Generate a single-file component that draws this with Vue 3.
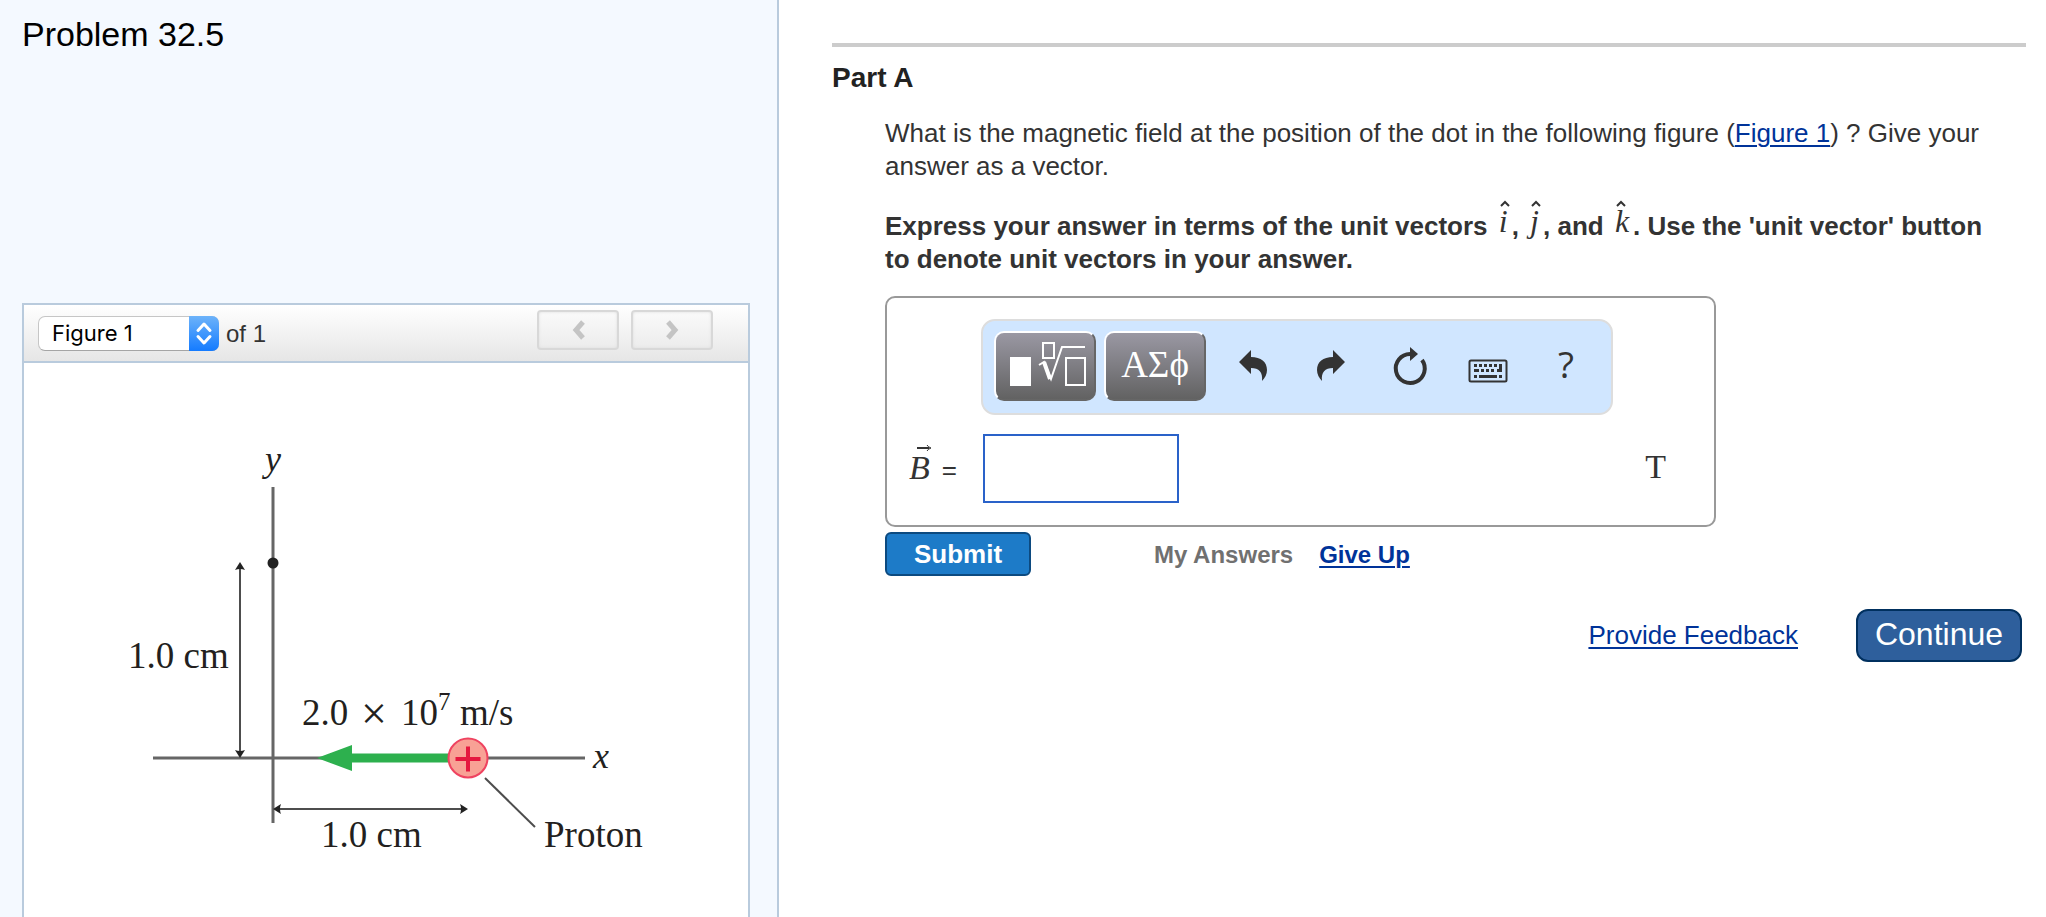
<template>
  <div class="page">
    <aside class="sidebar">
      <h1 class="problem-title">Problem 32.5</h1>

      <section class="figure-panel" aria-label="Figure">
        <header class="figure-header">
          <div class="figure-picker">
            <div class="select-wrap">
              <select id="figure-select" v-model="figure" aria-label="Figure">
                <option value="1">Figure 1</option>
              </select>
              <span class="stepper" aria-hidden="true">
                <svg width="30" height="35" viewBox="0 0 30 35">
                  <path d="M9 14.500 15 8l6 6.500M9 20.500 15 27l6-6.500" />
                </svg>
              </span>
            </div>
            <label for="figure-select">of 1</label>
          </div>
          <div class="figure-nav">
            <button type="button" aria-label="Previous figure" disabled>
              <svg width="14" height="20" viewBox="0 0 14 20"><path d="M12 2 5 10l7 8" /></svg>
            </button>
            <button type="button" aria-label="Next figure" disabled>
              <svg width="14" height="20" viewBox="0 0 14 20"><path d="m3 2 7 8-7 8" /></svg>
            </button>
          </div>
        </header>

        <svg class="diagram" viewBox="0 0 724 554" role="img" aria-label="Proton moving toward the origin">
          <g class="axis">
            <path d="M249 124V460" />
            <path d="M129 395H561" />
          </g>
          <g class="dimension">
            <path d="M216 202V392" />
            <path d="M253 446H441" />
            <path d="M461 415 511 464" />
          </g>
          <g class="tips">
            <path d="m216 199 5 8q-5-2-10 0z" />
            <path d="m216 395 5-8q-5 2-10 0z" />
            <path d="m249 446 8-5q-2 5 0 10z" />
            <path d="m444 446-8-5q2 5 0 10z" />
            <circle cx="249" cy="200" r="5.500" />
          </g>
          <path class="velocity" d="M293 395 328 382V390.500H426V399.500H328V408z" />
          <circle class="proton" cx="444" cy="395" r="19.500" />
          <path class="plus" d="M431.500 396H456.500M444 383.500V408.500" />

          <text class="italic" x="241" y="108">y</text>
          <text class="italic" x="569" y="405">x</text>
          <text x="104" y="305">1.0 cm</text>
          <text x="278" y="362">2.0 <tspan class="times" x="337" dy="4">×</tspan><tspan x="377" dy="-4">10</tspan><tspan class="power" dy="-15">7</tspan><tspan x="436" dy="15">m/s</tspan></text>
          <text x="297" y="484">1.0 cm</text>
          <text x="520" y="484">Proton</text>
        </svg>
      </section>
    </aside>

    <main class="content">
      <h2 class="part-title">Part A</h2>

      <div class="part-body">
        <p class="question">
          What is the magnetic field at the position of the dot in the following figure
          (<a href="#figure-select">Figure 1</a>) ? Give your answer as a vector.
        </p>
        <p class="instructions">
          Express your answer in terms of the unit vectors
          <span v-for="(v, n) in unitVectors" :key="v"><template v-if="n === 2">and </template><span class="unit-vector">{{ v }}<svg width="10" height="6" viewBox="0 0 10 6" aria-hidden="true"><path d="m1 5 4-4 4 4" /></svg></span>{{ n < 2 ? ', ' : '. ' }}</span>Use the 'unit vector' button to denote unit vectors in your answer.
        </p>

        <form class="answer-form" @submit.prevent>
          <div class="answer-box">
            <div class="toolbar" role="toolbar" aria-label="Equation tools">
              <button type="button" class="palette" aria-label="Templates">
                <svg width="78" height="46" viewBox="0 0 78 46">
                  <path class="solid" d="M4 16h21v29H4z" />
                  <path d="M37 2h11v15H37zM60 17h19v27H60z" />
                  <path d="m33 24 5-3 7 17L56 6h23" />
                  <path class="thick" d="m38 21 6 17" />
                </svg>
              </button>
              <button type="button" class="palette symbols">ΑΣϕ</button>
              <button type="button" class="tool" aria-label="Undo">
                <svg width="40" height="40" viewBox="0 0 40 40">
                  <path class="solid" d="M6 16 18 4v7c10 0 16 5 16 13 0 4-2 8-5 11 1-9-3-13-11-13v6z" />
                </svg>
              </button>
              <button type="button" class="tool" aria-label="Redo">
                <svg width="40" height="40" viewBox="0 0 40 40">
                  <path class="solid" d="M34 16 22 4v7C12 11 6 16 6 24c0 4 2 8 5 11-1-9 3-13 11-13v6z" />
                </svg>
              </button>
              <button type="button" class="tool" aria-label="Reset">
                <svg width="40" height="40" viewBox="0 0 40 40">
                  <path class="ring" d="M20 8a14.500 14.500 0 1 0 12 6" />
                  <path class="solid" d="M20 1 28 8l-8 7z" />
                </svg>
              </button>
              <button type="button" class="tool" aria-label="Keyboard shortcuts">
                <svg width="40" height="40" viewBox="0 0 40 40">
                  <rect class="case" x="1.500" y="14.500" width="37" height="21" rx="1.500" />
                  <path
                    class="solid"
                    d="M6 18h3v3H6zM11 18h3v3h-3zM16 18h3v3h-3zM21 18h3v3h-3zM26 18h3v3h-3zM31 18h3v8h-5v-3h2zM6 23h5v3H6zM13 23h3v3h-3zM18 23h3v3h-3zM23 23h3v3h-3zM6 29h3v3H6zM11 29h18v3H11zM31 29h3v3h-3z"
                  />
                </svg>
              </button>
              <button type="button" class="tool help" aria-label="Help">?</button>
            </div>

            <div class="answer-row">
              <label for="answer">
                <span class="vector">B<svg width="16" height="8" viewBox="0 0 16 8" aria-hidden="true"><path d="M1 4h12" /><path class="head" d="M11 1q1 2 4 3-3 1-4 3" /></svg></span>
                <span>=</span>
              </label>
              <input id="answer" v-model="answer" type="text" autocomplete="off" />
              <span class="unit">T</span>
            </div>
          </div>

          <div class="actions">
            <button type="submit" class="submit">Submit</button>
            <span class="my-answers">My Answers</span>
            <a href="#give-up">Give Up</a>
          </div>
        </form>
      </div>

      <footer class="footer">
        <a href="#feedback">Provide Feedback</a>
        <button type="button" class="continue">Continue</button>
      </footer>
    </main>
  </div>
</template>

<script setup>
import { ref } from 'vue'

const figure = ref('1')
const answer = ref('')
const unitVectors = ['i', 'j', 'k']
</script>

<style>
body {
  margin: 0;
  background: #fff;
}
</style>

<style scoped>
.page {
  display: grid;
  grid-template-columns: minmax(0, 779fr) minmax(0, 1267fr);
  min-height: 100vh;
  color: #333;
  font-family: "Liberation Sans", Arial, sans-serif;
  font-size: 26px;
  line-height: 33px;
}

.page * {
  box-sizing: border-box;
}

button,
input,
select {
  margin: 0;
  font: inherit;
}

a {
  color: #039;
  text-decoration-thickness: 2px;
  text-underline-offset: 3px;
}

svg {
  display: block;
  overflow: visible;
  fill: none;
}

/* left column */
.sidebar {
  display: flex;
  flex-direction: column;
  padding: 14px 27px 0 22px;
  border-right: 2px solid #b9cbdd;
  background: #f4f9ff;
}

.problem-title {
  margin: 0 0 249px;
  color: #000;
  font-size: 34px;
  font-weight: 400;
  line-height: 40px;
}

.figure-panel {
  flex: 1;
  border: 2px solid #b9cbdd;
  border-bottom: 0;
  background: #fff;
}

.figure-header {
  display: flex;
  align-items: center;
  justify-content: space-between;
  height: 58px;
  padding: 0 35px 0 14px;
  border-bottom: 2px solid #b9cbdd;
  background: linear-gradient(#fff, #e6e6e6);
}

.figure-picker {
  display: flex;
  align-items: center;
  gap: 7px;
  font-size: 24px;
}

.select-wrap {
  position: relative;
}

.select-wrap select {
  display: block;
  width: 181px;
  height: 35px;
  padding: 0 30px 0 13px;
  border: 1px solid #c6c6c6;
  border-bottom-color: #a5a5a5;
  border-radius: 7px;
  background: #fff;
  color: #000;
  font-family: Inter, Roboto, sans-serif;
  font-size: 22px;
  line-height: 32px;
  appearance: none;
}

.stepper {
  position: absolute;
  top: 0;
  right: 0;
  border-radius: 0 7px 7px 0;
  background: linear-gradient(#6db3fa, #147bff);
  pointer-events: none;
}

.stepper path {
  stroke: #fff;
  stroke-width: 3;
  stroke-linecap: round;
  stroke-linejoin: round;
}

.figure-nav {
  display: flex;
  gap: 12px;
  padding-bottom: 6px;
}

.figure-nav button {
  display: grid;
  place-items: center;
  width: 82px;
  height: 40px;
  padding: 0;
  border: 2px solid #d8d8d8;
  border-radius: 4px;
  background: linear-gradient(#fafafa, #ececec);
  box-shadow: inset 0 0 3px #ddd;
}

.figure-nav path {
  stroke: #c4c4c4;
  stroke-width: 5;
}

.diagram {
  width: 100%;
  height: auto;
}

.axis path {
  stroke: #666;
  stroke-width: 3;
}

.dimension path {
  stroke: #4d4d4d;
  stroke-width: 2;
}

.tips {
  fill: #222;
}

.velocity {
  fill: #2db04e;
}

.proton {
  fill: #f8a195;
  stroke: #ef4360;
  stroke-width: 2;
}

.plus {
  stroke: #e5183f;
  stroke-width: 4;
}

.diagram text {
  fill: #231f20;
  font-family: "Liberation Serif", "Times New Roman", serif;
  font-size: 37px;
}

.diagram .italic {
  font-size: 36px;
  font-style: italic;
}

.diagram .times {
  font-size: 46px;
}

.diagram .power {
  font-size: 25px;
}

/* right column */
.content {
  padding: 43px 20px 40px 53px;
}

.part-title {
  margin: 0;
  padding-top: 15px;
  border-top: 4px solid #ccc;
  color: #222;
  font-size: 28px;
  line-height: 32px;
}

.part-body {
  padding: 0 24px 0 53px;
}

.question {
  margin: 23px 0 26px;
}

.instructions {
  margin: 0 0 20px;
  font-weight: 700;
}

.unit-vector {
  position: relative;
  display: inline-block;
  padding: 0 4px;
  font-family: "Liberation Serif", "Times New Roman", serif;
  font-size: 32px;
  font-style: italic;
  font-weight: 400;
  line-height: 24px;
  vertical-align: 3px;
}

.unit-vector svg {
  position: absolute;
  top: -8px;
  left: 5px;
}

.unit-vector path,
.vector path {
  stroke: #333;
  stroke-width: 2;
}

.answer-box {
  max-width: 831px;
  padding: 21px 48px 22px 22px;
  border: 2px solid #999;
  border-radius: 10px;
}

.toolbar {
  display: flex;
  align-items: center;
  width: 632px;
  height: 96px;
  margin: 0 0 19px 72px;
  padding: 0 6px 2px 11px;
  border: 2px solid #ddd;
  border-radius: 14px;
  background: #d0e6ff;
}

.palette {
  display: grid;
  place-items: center;
  width: 102px;
  height: 70px;
  margin-right: 8px;
  padding: 0 0 4px;
  border: 2px solid;
  border-color: #fff #666 #666 #fff;
  border-radius: 10px;
  background: linear-gradient(#9a98a3, #626262);
}

.palette path {
  stroke: #fff;
  stroke-width: 2;
}

.palette .solid {
  fill: #fff;
  stroke: none;
}

.palette .thick {
  stroke-width: 4;
}

.symbols {
  color: #fff;
  font-family: "Liberation Serif", "Times New Roman", serif;
  font-size: 37px;
}

.tool {
  display: grid;
  flex: 1;
  place-items: center;
  height: 70px;
  padding: 0;
  border: 0;
  background: none;
  color: #333;
}

.tool .solid {
  fill: #333;
}

.tool .ring {
  stroke: #333;
  stroke-width: 4;
}

.tool .case {
  stroke: #333;
  stroke-width: 2;
}

.help {
  padding-bottom: 6px;
  font-family: "Open Sans", "Noto Sans", sans-serif;
  font-size: 37px;
}

.answer-row {
  display: flex;
  align-items: center;
}

.answer-row label {
  display: flex;
  align-items: baseline;
  gap: 12px;
  width: 74px;
}

.vector {
  position: relative;
  font-family: "Liberation Serif", "Times New Roman", serif;
  font-size: 34px;
  font-style: italic;
}

.vector svg {
  position: absolute;
  top: -7px;
  left: 7px;
}

.vector .head {
  stroke-width: 1;
}

#answer {
  width: 196px;
  height: 69px;
  padding: 0 12px;
  border: 2px solid #2a62c9;
  background: #fff;
}

.unit {
  margin-left: auto;
  padding-bottom: 4px;
  font-family: "Liberation Serif", "Times New Roman", serif;
  font-size: 34px;
}

.actions {
  display: flex;
  align-items: center;
  gap: 26px;
  margin-top: 5px;
  font-size: 24px;
  font-weight: 700;
}

.submit {
  width: 146px;
  height: 44px;
  margin-right: 97px;
  padding: 0;
  border: 2px solid #0c4a80;
  border-radius: 6px;
  background: #1d7bc8;
  color: #fff;
  font-size: 26px;
}

.my-answers {
  color: #707070;
}

.footer {
  display: flex;
  align-items: center;
  justify-content: flex-end;
  gap: 58px;
  margin-top: 33px;
  padding-right: 4px;
}

.continue {
  width: 166px;
  height: 53px;
  padding: 0 0 2px;
  border: 2px solid #00305f;
  border-radius: 12px;
  background: #2e5f9c;
  color: #fff;
  font-size: 32px;
}
</style>
